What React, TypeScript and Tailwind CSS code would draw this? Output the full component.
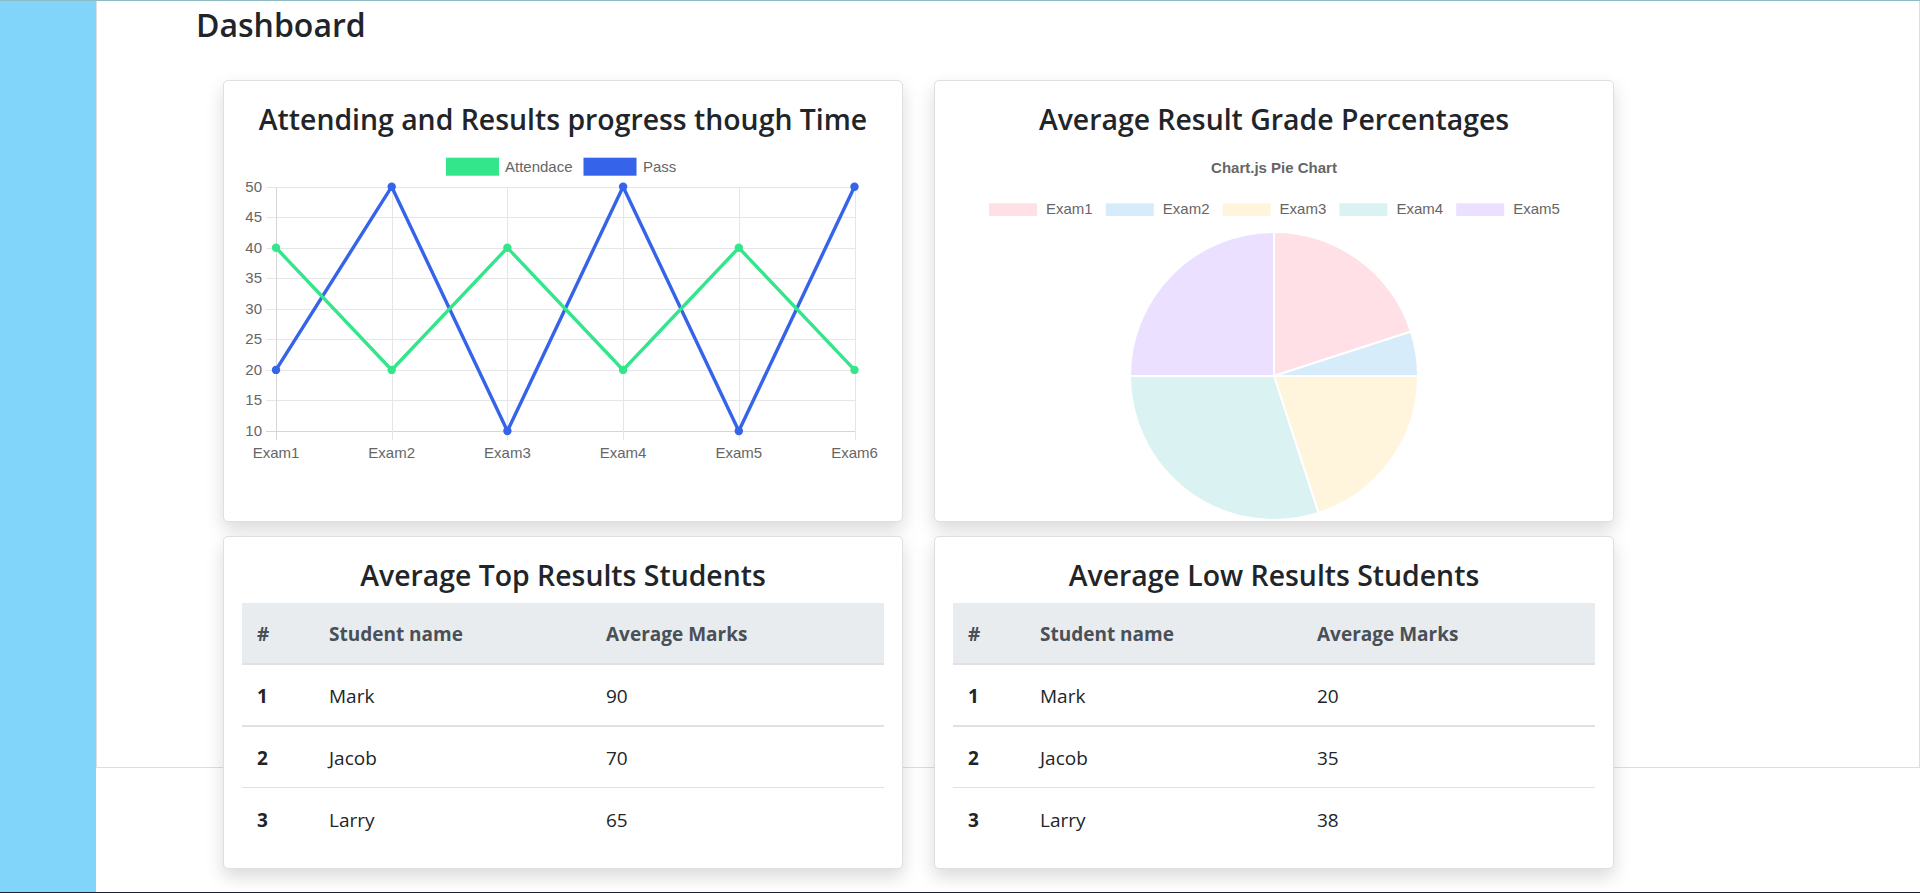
import React from "react";

const labels = ["Exam1", "Exam2", "Exam3", "Exam4", "Exam5", "Exam6"];
const attendance = [40, 20, 40, 20, 40, 20];
const pass = [20, 50, 10, 50, 10, 50];
const ticks = [50, 45, 40, 35, 30, 25, 20, 15, 10];

const px = (i: number) => 34 + i * 115.7;
const py = (v: number) => 295 - (v - 10) * 6.108;
const crisp = (n: number) => Math.round(n) + 0.5;

const chartFont = "'Liberation Sans', Arial, sans-serif";

const LineChart = () => {
  const green = "#33e68c";
  const blue = "#3563e9";
  return (
    <svg width="642" height="365" className="block" fontFamily={chartFont}>
      <rect x="204" y="21.7" width="53" height="18" fill={green} />
      <text x="263" y="35.7" fontSize="15" fill="#666">
        Attendace
      </text>
      <rect x="341.5" y="21.7" width="53" height="18" fill={blue} />
      <text x="401" y="35.7" fontSize="15" fill="#666">
        Pass
      </text>

      {ticks.map((t) => (
        <g key={t}>
          <line x1="24" x2="613" y1={crisp(py(t))} y2={crisp(py(t))} stroke={t === 10 ? "#d6d6d6" : "#e6e6e6"} />
          <text x="20" y={py(t) + 5} fontSize="15" fill="#666" textAnchor="end">
            {t}
          </text>
        </g>
      ))}
      {labels.map((l, i) => (
        <g key={l}>
          <line x1={crisp(px(i))} x2={crisp(px(i))} y1={crisp(py(50))} y2="304" stroke={i === 0 ? "#d6d6d6" : "#e6e6e6"} />
          <text x={px(i)} y="322.3" fontSize="15" fill="#666" textAnchor="middle">
            {l}
          </text>
        </g>
      ))}

      <polyline
        points={pass.map((v, i) => `${px(i)},${py(v)}`).join(" ")}
        fill="none"
        stroke={blue}
        strokeWidth="3.4"
      />
      {pass.map((v, i) => (
        <circle key={"p" + i} cx={px(i)} cy={py(v)} r="4.2" fill={blue} />
      ))}
      <polyline
        points={attendance.map((v, i) => `${px(i)},${py(v)}`).join(" ")}
        fill="none"
        stroke={green}
        strokeWidth="3.4"
      />
      {attendance.map((v, i) => (
        <circle key={"a" + i} cx={px(i)} cy={py(v)} r="4.2" fill={green} />
      ))}
    </svg>
  );
};

const slices = [
  { label: "Exam1", color: "#ffe0e6", d: "M321 240 L321 96 A144 144 0 0 1 457.96 195.5 Z" },
  { label: "Exam2", color: "#d7ecfb", d: "M321 240 L457.96 195.5 A144 144 0 0 1 465 240 Z" },
  { label: "Exam3", color: "#fff5dd", d: "M321 240 L465 240 A144 144 0 0 1 365.5 376.96 Z" },
  { label: "Exam4", color: "#dbf2f2", d: "M321 240 L365.5 376.96 A144 144 0 0 1 177 240 Z" },
  { label: "Exam5", color: "#ebe0ff", d: "M321 240 L177 240 A144 144 0 0 1 321 96 Z" },
];

const PieChart = () => (
  <svg width="642" height="385" className="block" fontFamily={chartFont}>
    <text x="321" y="37.3" fontSize="15" fontWeight="bold" fill="#666" textAnchor="middle">
      Chart.js Pie Chart
    </text>
    {slices.map((s, i) => (
      <g key={s.label}>
        <rect x={36 + i * 116.8} y="67.3" width="48" height="12.7" fill={s.color} />
        <text x={93 + i * 116.8} y="78.3" fontSize="15" fill="#666">
          {s.label}
        </text>
      </g>
    ))}
    {slices.map((s) => (
      <path key={s.label + "p"} d={s.d} fill={s.color} stroke="#fff" strokeWidth="2" />
    ))}
  </svg>
);

type Row = { n: number; name: string; marks: number };

const StudentsTable = ({ rows }: { rows: Row[] }) => (
  <div className="text-[19px]">
    <div className="flex h-[62px] items-center border-b-2 border-[#dee2e6] bg-[#e9ecef] pt-[3px] font-bold text-[#495057]">
      <div className="w-[72px] pl-[15px]">#</div>
      <div className="w-[277px] pl-[15px]">Student name</div>
      <div className="flex-1 pl-[15px]">Average Marks</div>
    </div>
    {rows.map((r, i) => (
      <div
        key={r.n}
        className={
          i === 0
            ? "flex h-[62px] items-center border-b-2 border-[#dee2e6] pt-[3px]"
            : i === 1
              ? "flex h-[61px] items-center border-b border-[#dee2e6] pt-[3px]"
              : "flex h-[62px] items-center pt-[3px]"
        }
      >
        <div className="w-[72px] pl-[15px] font-bold">{r.n}</div>
        <div className="w-[277px] pl-[15px]">{r.name}</div>
        <div className="flex-1 pl-[15px]">{r.marks}</div>
      </div>
    ))}
  </div>
);

const Card = ({ title, children, className }: { title: string; children: React.ReactNode; className: string }) => (
  <div
    className={
      "rounded-[5px] border border-[#dfdfdf] bg-white px-[18px] pt-[20px] shadow-[0_8px_18px_rgba(0,0,0,0.15)] " + className
    }
  >
    <h3 className="pt-[1px] text-center text-[28.4px] font-semibold leading-[34px]">{title}</h3>
    {children}
  </div>
);

export default function App() {
  return (
    <div className="flex h-[893px] w-full flex-col overflow-hidden bg-white font-['Open_Sans',sans-serif] text-[#212529]">
      <div className="h-px bg-[#8fbcc4]" />
      <div className="flex flex-1">
        <aside className="w-[96px] bg-[#81d4fa]" />
        <main className="h-[767px] flex-1 border-x border-b border-[#dedede]">
          <h2 className="pl-[99px] pt-[4px] text-[32px] font-semibold leading-[40px]">Dashboard</h2>
          <div className="ml-[126px] mt-[35px] grid grid-cols-[680px_680px] gap-x-[31px] gap-y-[14px]">
            <Card title="Attending and Results progress though Time" className="pb-[20px]">
              <LineChart />
            </Card>
            <Card title="Average Result Grade Percentages" className="pb-0">
              <PieChart />
            </Card>
            <Card title="Average Top Results Students" className="pb-[18px]">
              <div className="mt-[11px]">
                <StudentsTable
                  rows={[
                    { n: 1, name: "Mark", marks: 90 },
                    { n: 2, name: "Jacob", marks: 70 },
                    { n: 3, name: "Larry", marks: 65 },
                  ]}
                />
              </div>
            </Card>
            <Card title="Average Low Results Students" className="pb-[18px]">
              <div className="mt-[11px]">
                <StudentsTable
                  rows={[
                    { n: 1, name: "Mark", marks: 20 },
                    { n: 2, name: "Jacob", marks: 35 },
                    { n: 3, name: "Larry", marks: 38 },
                  ]}
                />
              </div>
            </Card>
          </div>
        </main>
      </div>
      <div className="h-px bg-[#1c2231]" />
    </div>
  );
}
